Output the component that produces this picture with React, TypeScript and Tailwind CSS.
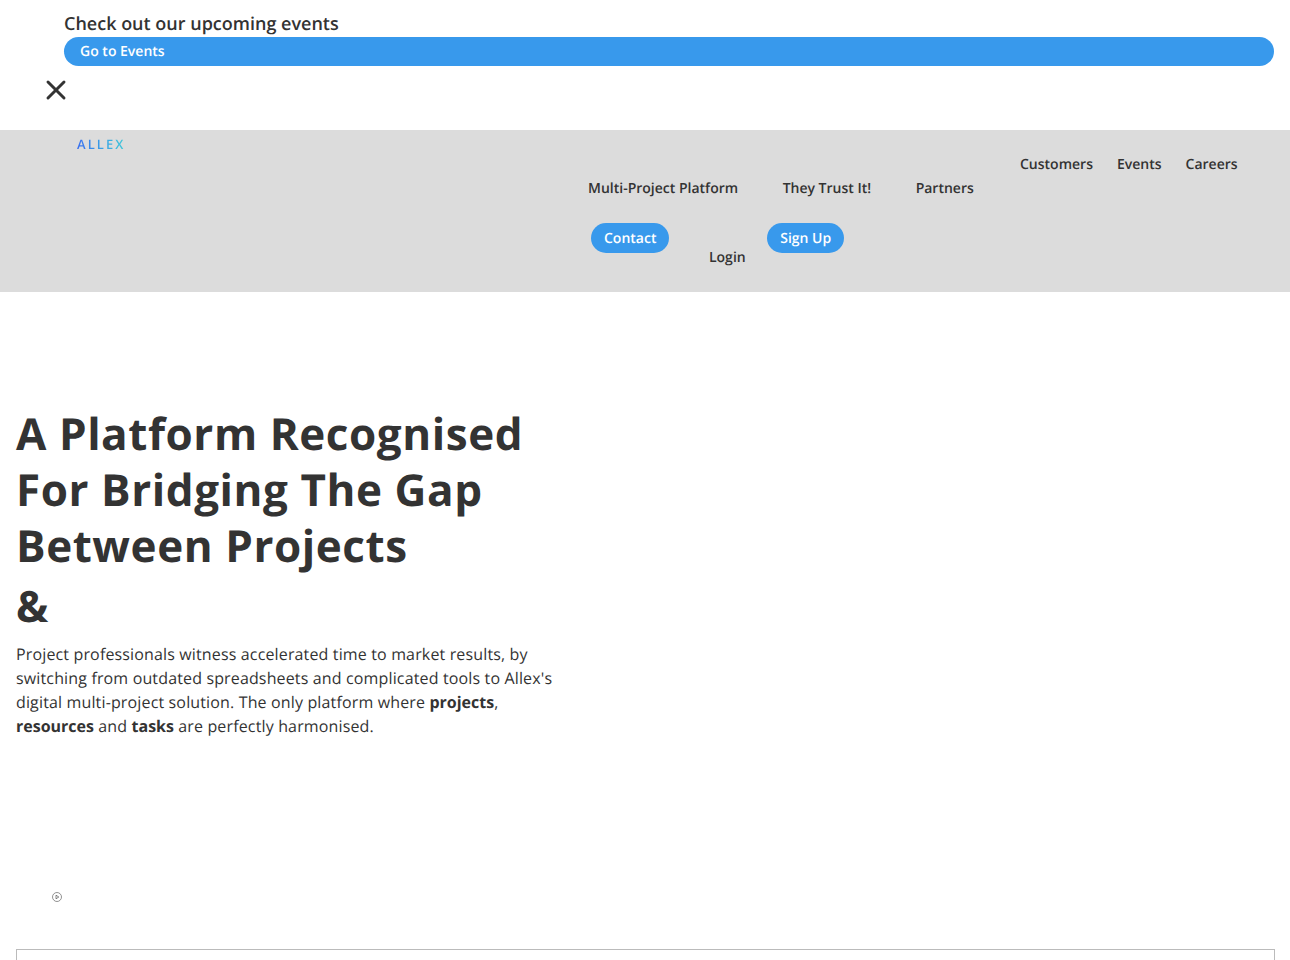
import { X } from "lucide-react";

const font = { fontFamily: '"Open Sans", sans-serif' };

const NavLink = ({ label, className = "" }: { label: string; className?: string }) => (
  <a className={`text-[14px] leading-[24px] font-semibold text-[#333] ${className}`}>{label}</a>
);

const App = () => {
  return (
    <div style={font} className="h-screen overflow-hidden bg-white text-[#333] antialiased [text-rendering:geometricPrecision]">
      {/* events banner */}
      <div className="h-[130px] pt-[11px]">
        <div className="pl-[64px] pr-[16px]">
          <p className="text-[18px] leading-[26px] font-semibold">Check out our upcoming events</p>
          <a className="block h-[29px] rounded-full bg-[#3899ec] px-4 text-[14px] leading-[29px] font-semibold text-white">
            Go to Events
          </a>
        </div>
        <div className="mt-[8px] pl-[40px]">
          <X className="h-8 w-8 text-[#333]" strokeWidth={2.2} />
        </div>
      </div>

      {/* nav */}
      <nav className="flex h-[162px] bg-[#dcdcdc]">
        <div className="w-[588px] pl-[77px] pt-[6px]">
          <span className="block w-fit bg-gradient-to-r from-[#3a6ff0] to-[#42c8d8] bg-clip-text text-[13px] leading-[16px] font-semibold tracking-[0.16em] text-transparent">
            ALLEX
          </span>
        </div>
        <div className="flex-1 pt-[23px]">
          <div className="flex gap-[24px] pl-[432px]">
            <NavLink label="Customers" />
            <NavLink label="Events" />
            <NavLink label="Careers" />
          </div>
          <div className="flex gap-[44.5px]">
            <NavLink label="Multi-Project Platform" />
            <NavLink label="They Trust It!" />
            <NavLink label="Partners" />
          </div>
          <div className="mt-[22px] flex items-start pl-[3px]">
            <a className="h-[30px] rounded-full bg-[#3899ec] px-[13px] text-[14px] leading-[31px] font-semibold text-white">
              Contact
            </a>
            <NavLink label="Login" className="mt-[23px] ml-[39.5px]" />
            <a className="ml-[21.5px] h-[30px] rounded-full bg-[#3899ec] px-[13px] text-[14px] leading-[31px] font-semibold text-white">
              Sign Up
            </a>
          </div>
        </div>
      </nav>

      {/* hero */}
      <section className="px-4 pt-[113px]">
        <h1 className="text-[44px] leading-[56px] font-bold tracking-[0.57px]">
          A Platform Recognised
          <br />
          For Bridging The Gap
          <br />
          Between Projects
        </h1>
        <p className="mt-[5px] text-[43px] leading-[56px] font-bold">&amp;</p>
        <p className="mt-[8px] w-[545px] text-[16px] leading-[24px] tracking-[0.145px]">
          Project professionals witness accelerated time to market results, by switching from outdated
          spreadsheets and complicated tools to Allex's digital multi-project solution. The only platform
          where <b className="tracking-normal">projects</b>, <b className="tracking-normal">resources</b> and{" "}
          <b className="tracking-normal">tasks</b> are perfectly harmonised.
        </p>
      </section>

      {/* video */}
      <div className="mt-[154px] pl-[52px]">
        <svg width="10" height="10" viewBox="0 0 10 10" fill="none" className="block">
          <circle cx="5" cy="5" r="4.5" stroke="#777" strokeWidth="0.8" />
          <path d="M4 3.2 L6.8 5 L4 6.8 Z" stroke="#555" strokeWidth="0.7" fill="none" />
        </svg>
      </div>
      <div className="mx-4 mt-[47px] h-[300px] w-[1259px] border border-[#bbb]" />
    </div>
  );
};

export default App;
